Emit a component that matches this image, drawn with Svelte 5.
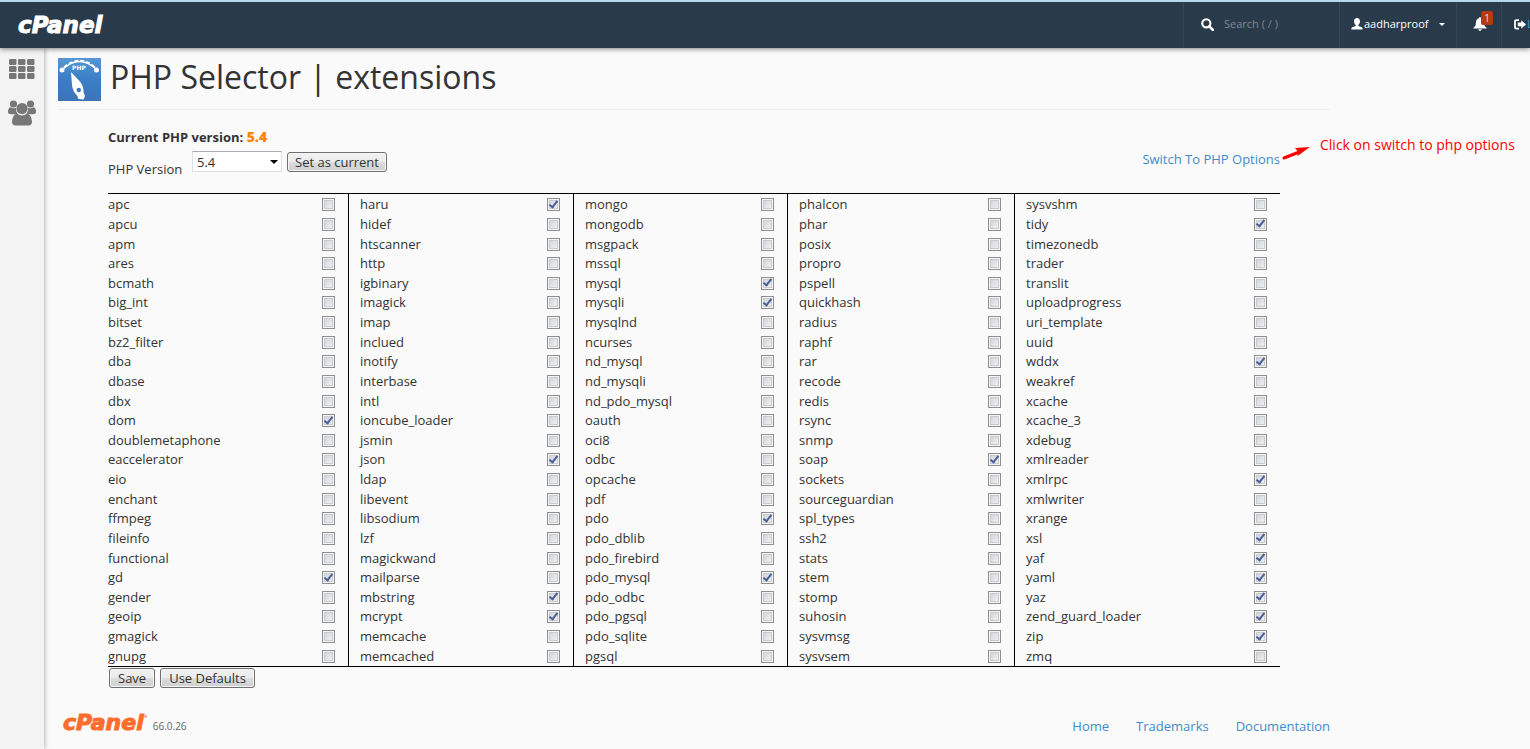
<script lang="ts">
	let version = '5.4'
	let search = ''

	const names = [
		'apc apcu apm ares bcmath big_int bitset bz2_filter dba dbase dbx dom doublemetaphone eaccelerator eio enchant ffmpeg fileinfo functional gd gender geoip gmagick gnupg',
		'haru hidef htscanner http igbinary imagick imap inclued inotify interbase intl ioncube_loader jsmin json ldap libevent libsodium lzf magickwand mailparse mbstring mcrypt memcache memcached',
		'mongo mongodb msgpack mssql mysql mysqli mysqlnd ncurses nd_mysql nd_mysqli nd_pdo_mysql oauth oci8 odbc opcache pdf pdo pdo_dblib pdo_firebird pdo_mysql pdo_odbc pdo_pgsql pdo_sqlite pgsql',
		'phalcon phar posix propro pspell quickhash radius raphf rar recode redis rsync snmp soap sockets sourceguardian spl_types ssh2 stats stem stomp suhosin sysvmsg sysvsem',
		'sysvshm tidy timezonedb trader translit uploadprogress uri_template uuid wddx weakref xcache xcache_3 xdebug xmlreader xmlrpc xmlwriter xrange xsl yaf yaml yaz zend_guard_loader zip zmq'
	]

	const enabled = 'dom gd haru json mbstring mcrypt mysql mysqli pdo pdo_mysql soap tidy wddx xmlrpc xsl yaf yaml yaz zend_guard_loader zip'.split(' ')

	let columns = names.map((list) =>
		list.split(' ').map((name) => ({ name, on: enabled.includes(name) }))
	)
</script>

<header>
	<a href="#home" class="logo">cPanel</a>
	<nav class="tools">
		<label class="search">
			<svg width="13" height="13" viewBox="0 0 13 13" aria-hidden="true">
				<circle cx="5.3" cy="5.3" r="4.1" fill="none" stroke="#fff" stroke-width="2.1" />
				<path d="M8.3 8.3 12 12" stroke="#fff" stroke-width="2.6" stroke-linecap="round" />
			</svg>
			<input type="text" placeholder="Search ( / )" aria-label="Search" bind:value={search} />
		</label>
		<a href="#user" class="user">
			<svg width="12" height="12" viewBox="0 0 12 12" aria-hidden="true">
				<path d="M6 0C7.9 0 9 1.3 9 3.3 9 5 8.2 6.1 7.4 6.9V8L10.8 9.2Q11.7 9.6 11.7 11.5H.3Q.3 9.6 1.2 9.2L4.6 8V6.9C3.8 6.1 3 5 3 3.3 3 1.3 4.1 0 6 0Z" fill="#fff" />
			</svg>
			<span>aadharproof</span>
			<i class="caret"></i>
		</a>
		<a href="#notifications" class="bell" aria-label="Notifications">
			<svg width="14" height="14" viewBox="0 0 14 14" aria-hidden="true">
				<path d="M7 0C7.6 0 8 .5 7.9 1.2 10 1.7 11 3.2 11.1 5.4 11.2 8.4 12 9.7 13.6 10.7V11.6H.4V10.7C2 9.7 2.8 8.4 2.9 5.4 3 3.2 4 1.7 6.1 1.2 6 .5 6.4 0 7 0ZM5.3 12.2H8.7C8.5 14.3 5.5 14.3 5.3 12.2Z" fill="#fff" />
			</svg>
			<b class="badge">1</b>
		</a>
		<a href="#logout" class="logout">
			<svg width="12" height="11" viewBox="0 0 12 11" aria-hidden="true">
				<path d="M5 1.1H2.6Q1 1.1 1 2.7V8.1Q1 9.7 2.6 9.7H5" fill="none" stroke="#fff" stroke-width="1.8" />
				<path d="M7.3 1.2 12 5.4 7.3 9.6V7.2H3.8V3.6H7.3Z" fill="#fff" />
			</svg>
			<span>Logout</span>
		</a>
	</nav>
</header>

<div class="page">
	<aside>
		<a href="#apps" aria-label="Home">
			<svg width="26" height="20" viewBox="0 0 26 20" fill="#777" aria-hidden="true">
				{#each [0, 7, 14] as y}
					{#each [0, 9, 18] as x}
						<rect {x} {y} width="7.5" height="6" rx="1.2" />
					{/each}
				{/each}
			</svg>
		</a>
		<a href="#users" aria-label="User Manager">
			<svg width="28" height="26" viewBox="0 0 28 26" fill="#777" aria-hidden="true">
				<circle cx="5.5" cy="4" r="3.6" />
				<circle cx="22.5" cy="4" r="3.6" />
				<path d="M2.5 7.2Q5.5 9.2 8 7.7 7.4 11.5 9.8 14.2H3Q0 14.2 0 11.7 0 8 2.5 7.2ZM25.5 7.2Q22.5 9.2 20 7.7 20.6 11.5 18.2 14.2H25Q28 14.2 28 11.7 28 8 25.5 7.2Z" />
				<circle cx="14" cy="8.5" r="5.6" />
				<path d="M9 13.5Q14 17.3 19 13.5 23.5 14.5 24 21.5 24 25.5 20.5 25.5H7.5Q4 25.5 4 21.5 4.5 14.5 9 13.5Z" />
			</svg>
		</a>
	</aside>

	<main>
		<div class="title">
			<svg width="43" height="43" viewBox="0 0 43 43" aria-hidden="true">
				<defs>
					<linearGradient id="tile" x2="0" y2="1">
						<stop offset="0" stop-color="#5797d3" />
						<stop offset=".5" stop-color="#397ec5" />
						<stop offset="1" stop-color="#3e73b9" />
					</linearGradient>
				</defs>
				<rect width="43" height="43" fill="url(#tile)" />
				<path d="M4 12Q21.5-5 39 12" fill="none" stroke="#fff" stroke-width="1.2" />
				<path d="M6 9.5Q21.5-4 37 9.5" fill="none" stroke="#fff" stroke-width="2" stroke-dasharray="4 2" />
				<circle cx="4" cy="12" r="2.5" fill="#fff" />
				<circle cx="38.5" cy="12" r="2.5" fill="#fff" />
				<text x="21" y="12" text-anchor="middle">PHP</text>
				<path fill-rule="evenodd" d="M13 14 22 23.5Q26 29 25.5 34L27 38 25.5 41.5 20.5 41 19 37.5Q14.5 33 14 27ZM20.8 29.8A2.2 2.2 0 1 0 20.8 34.2 2.2 2.2 0 1 0 20.8 29.8Z" fill="#fff" />
			</svg>
			<h1>PHP Selector | extensions</h1>
		</div>

		<form class="selector" on:submit|preventDefault>
			<p class="current">Current PHP version: <strong>5.4</strong></p>
			<div class="bar">
				<label for="version">PHP Version</label>
				<div class="select">
					<select id="version" bind:value={version}>
						<option>5.3</option>
						<option>5.4</option>
						<option>5.5</option>
						<option>5.6</option>
					</select>
				</div>
				<button type="button">Set as current</button>
				<div class="switch">
					<a href="#options">Switch To PHP Options</a>
					<div class="note">
						<svg width="30" height="14" viewBox="0 0 30 14" aria-hidden="true">
							<path d="M4 12 18 6.5" stroke="#f00" stroke-width="3" stroke-linecap="round" />
							<path d="M30 1 15 2 18 5.5 17.5 10Z" fill="#f00" />
						</svg>
						<span>Click on switch to php options</span>
					</div>
				</div>
			</div>

			<div class="extensions">
				{#each columns as column}
					<ul>
						{#each column as ext}
							<li>
								<label for={ext.name}>{ext.name}</label>
								<input type="checkbox" id={ext.name} bind:checked={ext.on} />
							</li>
						{/each}
					</ul>
				{/each}
			</div>

			<div class="actions">
				<button type="submit">Save</button>
				<button type="button">Use Defaults</button>
			</div>
		</form>

		<footer>
			<a href="#cpanel" class="logo orange">cPanel<sup>®</sup></a>
			<span class="release">66.0.26</span>
			<nav>
				<a href="#home">Home</a>
				<a href="#trademarks">Trademarks</a>
				<a href="#docs">Documentation</a>
			</nav>
		</footer>
	</main>
</div>

<style>
:global(body) {
	background: #fafafa;
	color: #333;
	font: 13px/20px "Open Sans", sans-serif;
	overflow-x: hidden;
}

a {
	color: #428bca;
	text-decoration: none;
}

header {
	position: relative;
	z-index: 2;
	display: flex;
	align-items: stretch;
	justify-content: space-between;
	height: 46px;
	border-top: 2px solid #b8d7ee;
	background: #293a4a;
	box-shadow: 0 1px 5px rgba(0, 0, 0, 0.5);
}

.logo {
	font: italic bold 23px/24px "DejaVu Sans", sans-serif;
	color: #fff;
	-webkit-text-stroke: 1px currentColor;
}
header .logo {
	padding: 11px 0 0 18px;
}

.tools {
	display: flex;
	font-size: 11px;
}
.tools > * {
	box-sizing: border-box;
	display: flex;
	align-items: center;
	padding-bottom: 2px;
	border-left: 1px solid #354656;
	color: #fff;
}

.search {
	width: 156px;
	padding-left: 17px;
	gap: 10px;
}
.search input {
	width: 100px;
	padding: 0;
	border: 0;
	outline: 0;
	background: transparent;
	color: #fff;
	font: inherit;
}
.search input::placeholder {
	color: #7f8992;
	opacity: 1;
}

.user {
	width: 117px;
	padding-left: 11px;
	gap: 1px;
}
.caret {
	margin-left: 10px;
	border: 3px solid transparent;
	border-top-color: #fff;
	border-bottom: 0;
}

.bell {
	position: relative;
	width: 45px;
	padding-left: 16px;
}
.badge {
	position: absolute;
	top: 9px;
	left: 24px;
	width: 12px;
	border-radius: 2px;
	background: #b33b10;
	color: #ddd;
	font-size: 10px;
	font-weight: normal;
	line-height: 14px;
	text-align: center;
}

.logout {
	width: 29px;
	padding-left: 12px;
	gap: 1px;
	overflow: hidden;
}
.logout svg {
	flex: none;
}
.logout span {
	color: #2a9fd8;
}

.page {
	display: flex;
	min-height: calc(100vh - 48px);
}

aside {
	display: flex;
	flex-direction: column;
	align-items: center;
	flex: none;
	gap: 21px;
	width: 44px;
	padding-top: 11px;
	background: #f3f3f3;
	box-shadow: 0 0 5px rgba(0, 0, 0, 0.4);
}
aside svg {
	display: block;
}

main {
	flex: 1;
	max-width: 1272px;
	padding: 10px 14px 0;
}

.title {
	display: flex;
	gap: 9px;
	height: 51px;
	border-bottom: 1px solid #eee;
}
.title text {
	fill: #fff;
	font: bold 6px "DejaVu Sans", sans-serif;
}
h1 {
	margin: 0;
	font-size: 32px;
	font-weight: normal;
	line-height: 38px;
}

.selector {
	margin: 0 50px;
}

.current {
	margin: 17px 0 4px;
	font-weight: bold;
}
.current strong {
	color: #ff8400;
	font-size: 14px;
}

.bar {
	display: flex;
	align-items: flex-start;
	height: 42px;
}
.bar label {
	width: 84px;
	padding-top: 8px;
}

.select {
	position: relative;
	width: 90px;
	margin-right: 5px;
}
.select::after {
	content: "";
	position: absolute;
	top: 9px;
	right: 4px;
	border: 4px solid transparent;
	border-top-color: #000;
	border-bottom: 0;
	pointer-events: none;
}
select {
	appearance: none;
	box-sizing: border-box;
	width: 100%;
	height: 21px;
	padding: 0 4px;
	border: 1px solid #dedfe4;
	border-top-color: #abadb3;
	border-radius: 0;
	background: #fff;
	color: #333;
	font: inherit;
}

button {
	box-sizing: border-box;
	height: 20px;
	padding: 0 8px;
	border: 1px solid #707070;
	border-radius: 3px;
	background: linear-gradient(#f2f2f2, #ebebeb 50%, #ddd 50%, #cfcfcf);
	box-shadow: inset 0 0 0 1px #f6f6f6;
	color: #333;
	font: inherit;
	line-height: 18px;
}
.bar button {
	margin-top: 1px;
	padding: 0 7px;
}

.switch {
	position: relative;
	margin-left: auto;
	line-height: 16px;
}
.note {
	position: absolute;
	left: 100%;
	top: -15px;
	display: flex;
	align-items: flex-end;
	gap: 10px;
	color: #f00;
	font-size: 14px;
	line-height: 18px;
	white-space: nowrap;
}
.note span {
	padding-bottom: 6px;
}

.extensions {
	display: grid;
	grid-template-columns: 241fr 225fr 214fr 227fr 265fr;
	border-top: 1px solid #000;
	border-bottom: 1px solid #000;
}
ul {
	display: grid;
	grid-auto-rows: 1fr;
	min-height: 471px;
	margin: 0;
	padding: 1px 13px 0 11px;
	border-right: 1px solid #000;
	list-style: none;
}
ul:first-child {
	padding-left: 0;
}
ul:last-child {
	border-right: 0;
}
li {
	display: flex;
	align-items: center;
	justify-content: space-between;
	min-height: 0;
	line-height: 19px;
}

input[type="checkbox"] {
	appearance: none;
	box-sizing: border-box;
	display: grid;
	place-items: center;
	width: 13px;
	height: 13px;
	margin: 0;
	border: 1px solid #8e8f8f;
	background: linear-gradient(135deg, #cbcfd5, #f6f6f6);
	box-shadow: inset 0 0 0 1px #f4f4f4, inset 0 0 0 2px #c9ccd1;
}
input[type="checkbox"]:checked::after {
	content: "";
	width: 3px;
	height: 7px;
	margin-top: -3px;
	border: solid #4a5f97;
	border-width: 0 2px 2px 0;
	transform: rotate(38deg);
}

.actions {
	display: flex;
	gap: 5px;
	padding: 1px 1px 0;
}

footer {
	display: flex;
	align-items: center;
	margin-top: 22px;
	padding-left: 5px;
}
.orange {
	color: #ff6c2c;
	font-size: 22px;
}
.orange sup {
	font-size: 4px;
	font-style: normal;
	line-height: 0;
	vertical-align: 12px;
	-webkit-text-stroke: 0;
}
.release {
	margin: 6px 0 0 5px;
	color: #666;
	font-size: 10px;
}
footer nav {
	display: flex;
	gap: 27px;
	margin: 6px 0 0 auto;
}
</style>
